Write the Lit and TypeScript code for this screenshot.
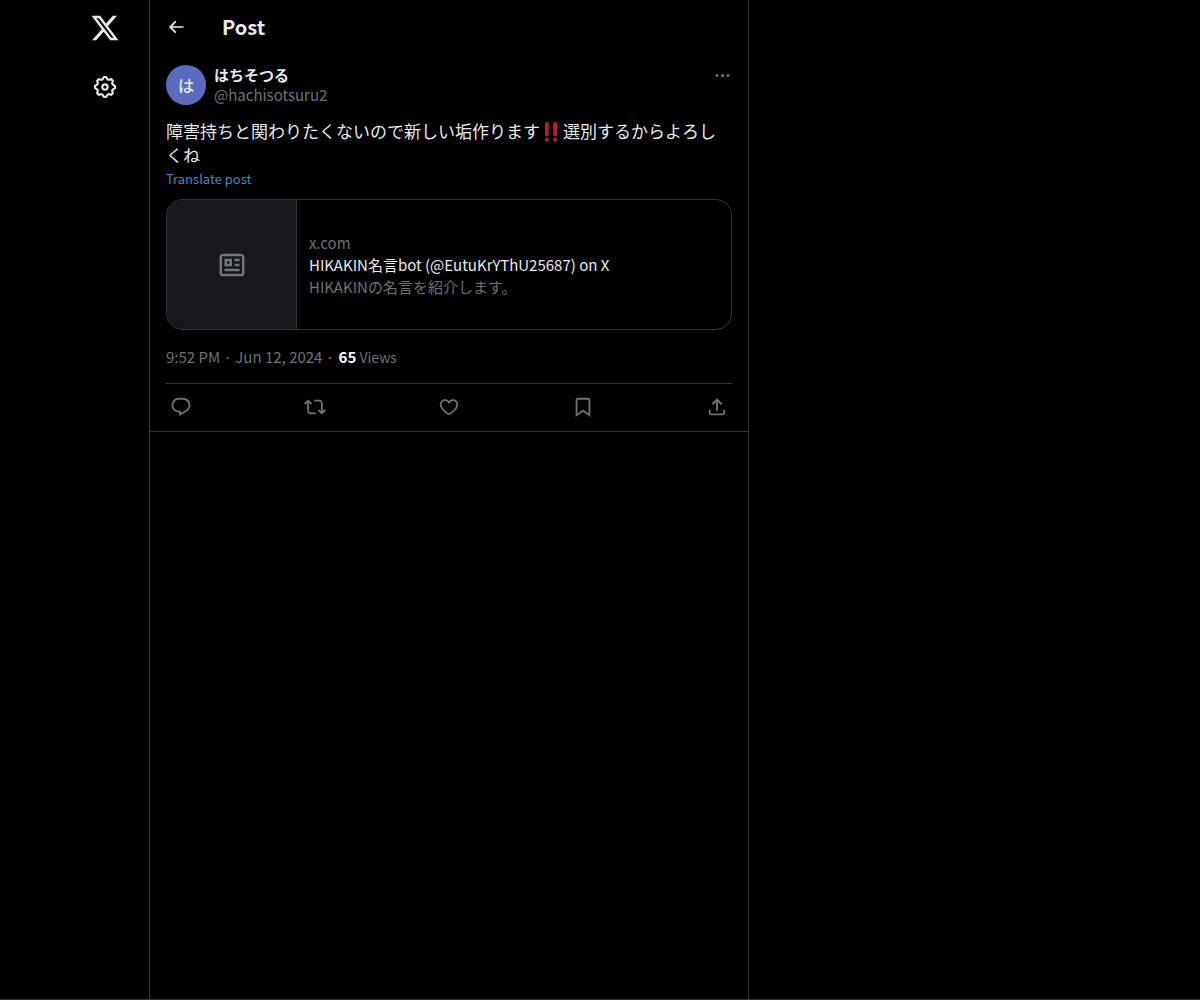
import { LitElement, html, css, svg } from "lit";
import { customElement, property } from "lit/decorators.js";

const ICONS: Record<string, string> = {
  logo: "M18.244 2.25h3.308l-7.227 8.26 8.502 11.24H16.17l-5.214-6.817L4.99 21.75H1.68l7.73-8.835L1.254 2.25H8.08l4.713 6.231zm-1.161 17.52h1.833L7.084 4.126H5.117z",
  settings:
    "M10.54 1.75h2.92l1.57 2.36c.11.17.32.25.53.21l2.53-.59 2.17 2.17-.58 2.54c-.05.2.04.41.21.53l2.36 1.57v2.92l-2.36 1.57c-.17.12-.26.33-.21.53l.58 2.54-2.17 2.17-2.53-.59c-.21-.04-.42.04-.53.21l-1.57 2.36h-2.92l-1.58-2.36c-.11-.17-.32-.25-.52-.21l-2.54.59-2.17-2.17.58-2.54c.05-.2-.03-.41-.21-.53l-2.35-1.57v-2.92L4.1 8.97c.18-.12.26-.33.21-.53L3.73 5.9 5.9 3.73l2.54.59c.2.04.41-.04.52-.21l1.58-2.36zm1.07 2l-.98 1.47C10.05 6.08 9 6.5 7.99 6.27l-1.46-.34-.6.6.33 1.46c.24 1.01-.18 2.07-1.05 2.64l-1.46.98v.78l1.46.98c.87.57 1.29 1.63 1.05 2.64l-.33 1.46.6.6 1.46-.34c1.01-.23 2.06.19 2.64 1.05l.98 1.47h.78l.97-1.47c.58-.86 1.63-1.28 2.65-1.05l1.45.34.61-.6-.34-1.46c-.23-1.01.18-2.07 1.05-2.64l1.47-.98v-.78l-1.47-.98c-.87-.57-1.28-1.63-1.05-2.64l.34-1.46-.61-.6-1.45.34c-1.02.23-2.07-.19-2.65-1.05l-.97-1.47h-.78zM12 10.5c-.83 0-1.5.67-1.5 1.5s.67 1.5 1.5 1.5c.83 0 1.5-.67 1.5-1.5s-.67-1.5-1.5-1.5zM8.5 12c0-1.93 1.56-3.5 3.5-3.5 1.93 0 3.5 1.57 3.5 3.5s-1.57 3.5-3.5 3.5c-1.94 0-3.5-1.57-3.5-3.5z",
  back: "M7.414 13l5.043 5.04-1.414 1.42L3.586 12l7.457-7.46 1.414 1.42L7.414 11H21v2H7.414z",
  more: "M3 12c0-1.1.9-2 2-2s2 .9 2 2-.9 2-2 2-2-.9-2-2zm9 2c1.1 0 2-.9 2-2s-.9-2-2-2-2 .9-2 2 .9 2 2 2zm7 0c1.1 0 2-.9 2-2s-.9-2-2-2-2 .9-2 2 .9 2 2 2z",
  article:
    "M1.998 5.5c0-1.38 1.119-2.5 2.5-2.5h15c1.381 0 2.5 1.12 2.5 2.5v13c0 1.38-1.119 2.5-2.5 2.5h-15c-1.381 0-2.5-1.12-2.5-2.5v-13zm2.5-.5c-.276 0-.5.22-.5.5v13c0 .28.224.5.5.5h15c.276 0 .5-.22.5-.5v-13c0-.28-.224-.5-.5-.5h-15zM6 7h6v6H6V7zm2 2v2h2V9H8zm10 0h-4V7h4v2zm0 4h-4v-2h4v2zm-.002 4h-12v-2h12v2z",
  reply:
    "M1.751 10c0-4.42 3.584-8 8.005-8h4.366c4.49 0 8.129 3.64 8.129 8.13 0 2.96-1.607 5.68-4.196 7.11l-8.054 4.46v-3.69h-.067c-4.49.1-8.183-3.51-8.183-8.01zm8.005-6c-3.317 0-6.005 2.69-6.005 6 0 3.37 2.77 6.08 6.138 6.01l.351-.01h1.761v2.3l5.087-2.81c1.951-1.08 3.163-3.13 3.163-5.36 0-3.39-2.744-6.13-6.129-6.13H9.756z",
  repost:
    "M4.5 3.88l4.432 4.14-1.364 1.46L5.5 7.55V16c0 1.1.896 2 2 2H13v2H7.5c-2.209 0-4-1.79-4-4V7.55L1.432 9.48.068 8.02 4.5 3.88zM16.5 6H11V4h5.5c2.209 0 4 1.79 4 4v8.45l2.068-1.93 1.364 1.46-4.432 4.14-4.432-4.14 1.364-1.46 2.068 1.93V8c0-1.1-.896-2-2-2z",
  like: "M16.697 5.5c-1.222-.06-2.679.51-3.89 2.16l-.805 1.09-.806-1.09C9.984 6.01 8.526 5.44 7.304 5.5c-1.243.07-2.349.78-2.91 1.91-.552 1.12-.633 2.78.479 4.82 1.074 1.97 3.257 4.27 7.129 6.61 3.87-2.34 6.052-4.64 7.126-6.61 1.111-2.04 1.03-3.7.477-4.82-.561-1.13-1.666-1.84-2.908-1.91zm4.187 7.69c-1.351 2.48-4.001 5.12-8.379 7.67l-.503.3-.504-.3c-4.379-2.55-7.029-5.19-8.382-7.67-1.36-2.5-1.41-4.86-.514-6.67.887-1.79 2.647-2.91 4.601-3.01 1.651-.09 3.368.56 4.798 2.01 1.429-1.45 3.146-2.1 4.796-2.01 1.954.1 3.714 1.22 4.601 3.01.896 1.81.846 4.17-.514 6.67z",
  bookmark:
    "M4 4.5C4 3.12 5.119 2 6.5 2h11C18.881 2 20 3.12 20 4.5v18.44l-8-5.71-8 5.71V4.5zM6.5 4c-.276 0-.5.22-.5.5v14.56l6-4.29 6 4.29V4.5c0-.28-.224-.5-.5-.5h-11z",
  share:
    "M12 2.59l5.7 5.7-1.41 1.42L13 6.41V16h-2V6.41l-3.3 3.3-1.41-1.42L12 2.59zM21 15l-.02 3.51c0 1.38-1.12 2.49-2.5 2.49H5.5C4.11 21 3 19.88 3 18.5V15h2v3.5c0 .28.22.5.5.5h12.98c.28 0 .5-.22.5-.5L19 15h2z",
};

@customElement("x-icon")
export class XIcon extends LitElement {
  @property() name = "";

  static styles = css`
    :host {
      display: block;
      width: 22px;
      height: 22px;
    }
    .glyph {
      display: block;
      width: 100%;
      height: 100%;
      fill: currentColor;
    }
  `;

  render() {
    return html`<svg class="glyph" viewBox="0 0 24 24" aria-hidden="true">
      ${svg`<path d=${ICONS[this.name] ?? ""}></path>`}
    </svg>`;
  }
}

const ACTIONS = [
  { icon: "reply", label: "Reply" },
  { icon: "repost", label: "Repost" },
  { icon: "like", label: "Like" },
  { icon: "bookmark", label: "Bookmark" },
  { icon: "share", label: "Share post" },
];

@customElement("app-root")
export class AppRoot extends LitElement {
  static styles = css`
    :host {
      --line: #333335;
      --muted: #6e7072;
      --text: #e7e9ea;
      display: block;
      min-height: 100vh;
      background: #000;
      color: var(--text);
      font-family: "Noto Sans CJK JP", "Noto Sans", sans-serif;
      font-size: 15px;
      line-height: 20px;
    }
    * {
      box-sizing: border-box;
    }
    a {
      color: inherit;
      text-decoration: none;
    }
    button {
      display: flex;
      align-items: center;
      justify-content: center;
      padding: 0;
      border: 0;
      background: none;
      color: inherit;
      font: inherit;
      cursor: pointer;
    }
    .page {
      display: grid;
      grid-template-columns: minmax(88px, 149fr) minmax(0, 600px) minmax(0, 451fr);
      min-height: 100vh;
      border-bottom: 1px solid var(--line);
    }
    .rail {
      display: flex;
      flex-direction: column;
      align-items: flex-end;
      gap: 7px;
      padding: 2px 18px;
    }
    .rail-link {
      display: flex;
      align-items: center;
      justify-content: center;
      width: 52px;
      height: 52px;
    }
    .logo {
      width: 30px;
      height: 30px;
    }
    .gear {
      width: 26px;
      height: 26px;
    }
    .column {
      border: solid var(--line);
      border-width: 0 1px;
    }
    .bar {
      display: flex;
      align-items: center;
      height: 53px;
      padding: 0 16px;
    }
    .back {
      width: 20px;
      height: 36px;
      margin-right: 36px;
    }
    .small {
      width: 20px;
      height: 20px;
    }
    .title {
      margin: 0;
      font-size: 20px;
      line-height: 24px;
      font-weight: 700;
    }
    .post {
      padding: 12px 16px 0;
      border-bottom: 1px solid var(--line);
    }
    .author {
      display: flex;
      gap: 8px;
    }
    .avatar {
      display: flex;
      align-items: center;
      justify-content: center;
      width: 40px;
      height: 40px;
      border-radius: 50%;
      background: #5c6bc0;
      font-size: 16px;
      font-weight: 500;
    }
    .who {
      display: flex;
      flex: 1;
      flex-direction: column;
    }
    .name {
      font-weight: 700;
    }
    .handle,
    .more,
    .meta,
    .actions {
      color: var(--muted);
    }
    .more {
      width: 19px;
      height: 21px;
    }
    .dots {
      width: 19px;
      height: 19px;
    }
    .body {
      margin: 14px 0 0;
      font-size: 17px;
      line-height: 24px;
    }
    .emoji {
      width: 20px;
      height: 20px;
      margin: 0 2px 0 1px;
      vertical-align: -4px;
      fill: #b0203a;
    }
    .translate {
      display: inline-block;
      font-size: 13px;
      line-height: 24px;
      color: #4389c8;
      vertical-align: top;
    }
    .card {
      display: flex;
      margin-top: 8px;
      border: 1px solid var(--line);
      border-radius: 16px;
      overflow: hidden;
    }
    .thumb {
      display: flex;
      align-items: center;
      justify-content: center;
      width: 130px;
      height: 129px;
      border-right: 1px solid var(--line);
      background: #16181b;
      color: #71767b;
    }
    .article {
      width: 30px;
      height: 30px;
    }
    .summary {
      display: flex;
      flex: 1;
      flex-direction: column;
      justify-content: center;
      gap: 2px;
      min-width: 0;
      padding: 12px;
      color: var(--muted);
    }
    .headline {
      color: var(--text);
    }
    .meta {
      margin: 17px 0 16px;
    }
    .views {
      margin-left: 1px;
      font-size: 14px;
    }
    .count {
      color: #fff;
      font-size: 15px;
    }
    .actions {
      display: flex;
      justify-content: space-between;
      height: 48px;
      padding-bottom: 1px;
      border-top: 1px solid var(--line);
    }
    .action {
      width: 30px;
    }
  `;

  render() {
    return html`
      <div class="page">
        <nav class="rail" aria-label="Primary">
          <a class="rail-link" href="#home" aria-label="X"><x-icon class="logo" name="logo"></x-icon></a>
          <a class="rail-link" href="#settings" aria-label="Settings"><x-icon class="gear" name="settings"></x-icon></a>
        </nav>
        <main class="column">
          <header class="bar">
            <button class="back" aria-label="Back"><x-icon class="small" name="back"></x-icon></button>
            <h1 class="title">Post</h1>
          </header>
          <article class="post">
            <div class="author">
              <a class="avatar" href="#profile">は</a>
              <div class="who">
                <a class="name" href="#profile">はちそつる</a>
                <a class="handle" href="#profile">@hachisotsuru2</a>
              </div>
              <button class="more" aria-label="More"><x-icon class="dots" name="more"></x-icon></button>
            </div>
            <p class="body" lang="ja">障害持ちと関わりたくないので新しい垢作ります<svg
                class="emoji" viewBox="0 0 36 36" role="img" aria-label="‼️">
                <rect x="7" y="0" width="7" height="26" rx="3"></rect>
                <circle cx="10.5" cy="32" r="3.5"></circle>
                <rect x="22" y="0" width="7" height="26" rx="3"></rect>
                <circle cx="25.5" cy="32" r="3.5"></circle>
              </svg>選別するからよろしくね</p>
            <button class="translate">Translate post</button>
            <a class="card" href="#card">
              <div class="thumb"><x-icon class="article" name="article"></x-icon></div>
              <div class="summary">
                <span>x.com</span>
                <span class="headline">HIKAKIN名言bot (@EutuKrYThU25687) on X</span>
                <span>HIKAKINの名言を紹介します。</span>
              </div>
            </a>
            <p class="meta">9:52 PM · Jun 12, 2024 · <span class="views"><b class="count">65</b> Views</span></p>
            <div class="actions">
              ${ACTIONS.map(
                (a) => html`<button class="action" aria-label=${a.label}><x-icon name=${a.icon}></x-icon></button>`
              )}
            </div>
          </article>
        </main>
      </div>
    `;
  }
}
